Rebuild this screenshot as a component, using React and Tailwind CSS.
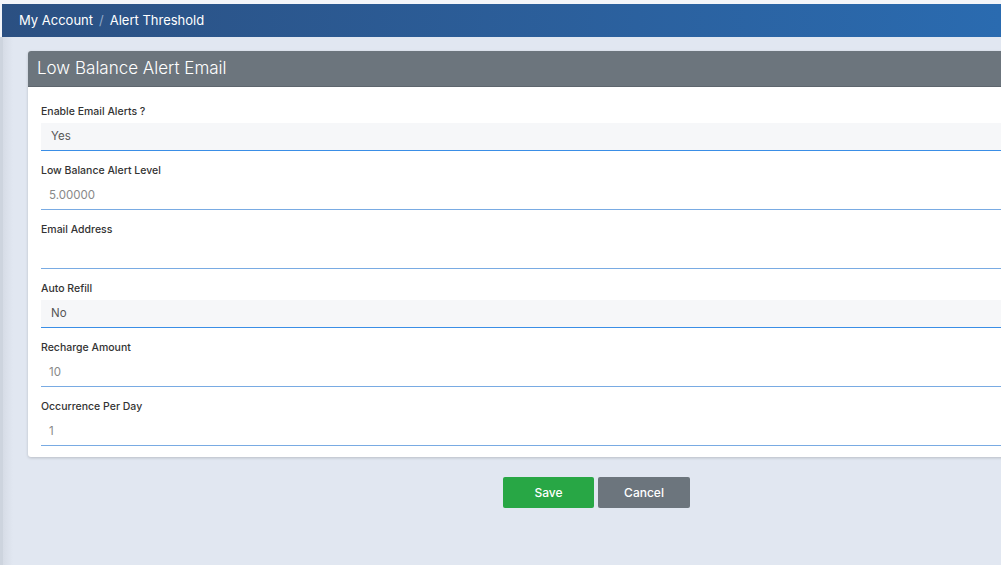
import React from 'react';

const fields = [
  { label: 'Enable Email Alerts ?', value: 'Yes', select: true },
  { label: 'Low Balance Alert Level', value: '5.00000' },
  { label: 'Email Address', value: '' },
  { label: 'Auto Refill', value: 'No', select: true },
  { label: 'Recharge Amount', value: '10' },
  { label: 'Occurrence Per Day', value: '1' },
];

export default function App() {
  return (
    <div
      className="h-[565px] w-[1001px] overflow-hidden bg-[#f3f5f9]"
      style={{ fontFamily: 'Inter, "Open Sans", sans-serif' }}
    >
      {/* Breadcrumb bar */}
      <div className="mt-[4px] ml-[2px] flex h-[33px] items-center bg-gradient-to-r from-[#2b5082] to-[#2a6bb0] pl-[17px] text-[13px] text-white">
        <span>My Account</span>
        <span className="mx-[6px] text-[#8fa8c8]">/</span>
        <span>Alert Threshold</span>
      </div>

      <div className="flex h-full">
        {/* left edge shade */}
        <div className="w-[3px] shrink-0 bg-[#cdd4de]" />
        <div className="w-[10px] shrink-0 bg-gradient-to-r from-[#d6dce6] to-[#e1e7f1]" />

        <div className="flex-1 bg-[#e1e7f1] pt-[14px] pl-[15px]">
          {/* Card */}
          <div className="w-[1000px] rounded-[3px] bg-white shadow-[0_1px_3px_rgba(0,0,0,0.18)]">
            <div className="flex h-[36px] items-center rounded-t-[3px] border-b border-[#5e666e] bg-[#6c757d] pl-[9px] text-[17px] font-light text-white">
              Low Balance Alert Email
            </div>
            <div className="px-[13px] pt-[12px] pb-[4px]">
              {fields.map((f) => (
                <div key={f.label}>
                  <div className="h-[22px] text-[10.5px] font-medium leading-[26px] text-[#333]">
                    {f.label}
                  </div>
                  <div
                    className={`mt-[2px] mb-[7px] flex h-[28px] items-center border-b text-[11.5px] ${
                      f.select
                        ? 'border-[#3a8ee6] bg-[#f6f7f9] pl-[10px] text-[#555]'
                        : 'border-[#79abe3] bg-white pl-[8px] text-[#888]'
                    }`}
                  >
                    {f.value}
                  </div>
                </div>
              ))}
            </div>
          </div>

          {/* Buttons */}
          <div className="mt-[20px] ml-[475px] flex gap-[4px]">
            <button className="h-[31px] w-[91px] rounded-[2px] bg-[#28a745] text-[12px] font-medium text-white">
              Save
            </button>
            <button className="h-[31px] w-[92px] rounded-[2px] bg-[#6c757d] text-[12px] font-medium text-white">
              Cancel
            </button>
          </div>
        </div>
      </div>
    </div>
  );
}
